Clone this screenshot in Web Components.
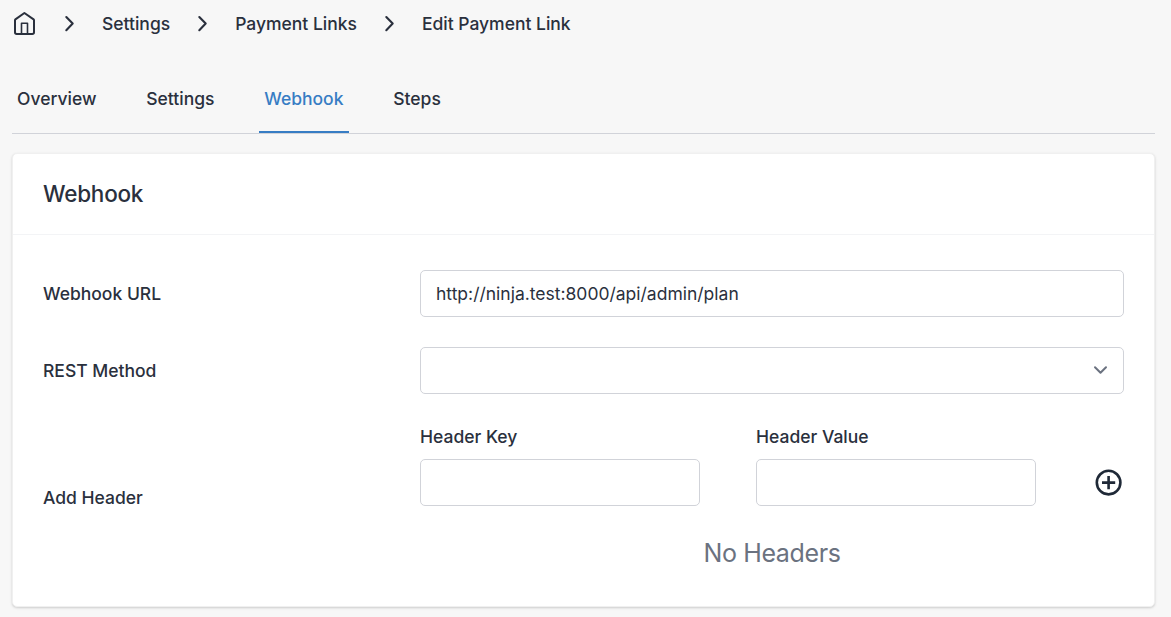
<!DOCTYPE html>
<html lang="en">
<head>
<meta charset="utf-8">
<title>Edit Payment Link</title>
<style>
html,body{height:100%}
body{margin:0;background:#f7f7f7;color:#2a303d;font:500 17.5px/25px Inter,"Liberation Sans",sans-serif;overflow:hidden}
</style>
</head>
<body>
<payment-page></payment-page>
<script>
const define = (name, html, setup) => {
  const template = document.createElement('template');
  template.innerHTML = html;
  customElements.define(name, class extends HTMLElement {
    constructor() {
      super();
      this.attachShadow({ mode: 'open' }).append(template.content.cloneNode(true));
    }
    connectedCallback() { if (setup) setup(this, this.shadowRoot); }
  });
};

define('home-icon', `<style>:host{display:block;width:25px;height:25px}svg{display:block}</style>
<svg width="25" height="25" viewBox="0 0 25 25" fill="none" stroke="currentColor" stroke-width="2" stroke-linecap="round" stroke-linejoin="round"><path d="M12.4 2 3.4 8.4Q3 8.7 3 9.2V21.3Q3 23 4.7 23H20.3Q22 23 22 21.3V9.2Q22 8.7 21.6 8.4Z"/><path stroke-width="1.6" d="M9.5 22.5V12.2H15.5V22.5"/></svg>`);

define('crumb-chevron', `<style>:host{display:block;width:25px;height:25px}svg{display:block}</style>
<svg width="25" height="25" viewBox="0 0 25 25" fill="none" stroke="currentColor" stroke-width="2.1" stroke-linecap="round" stroke-linejoin="round"><path d="m9.3 6 6.4 6.6-6.4 6.6"/></svg>`);

define('bread-crumbs', `<style>:host{display:flex;align-items:center;gap:20px;height:25px;letter-spacing:-.01px}</style><slot></slot>`);

define('tab-item', `<style>:host{display:block;box-sizing:border-box;height:47px;padding:0 5.2px 0 5px;border-bottom:2px solid transparent;white-space:nowrap}
:host([active]){color:#377dc4;border-color:#377dc4}</style><slot></slot>`);

define('tab-bar', `<style>:host{display:flex;gap:39.6px;border-bottom:1px solid #d1d3d9}</style><slot></slot>`);

define('settings-card', `<style>
:host{display:block;box-sizing:border-box;height:454px;background:#fff;border:1px solid #f0f0f0;border-radius:5px;box-shadow:0 1px 3px rgba(0,0,0,.12),0 1px 2px rgba(0,0,0,.06)}
header{box-sizing:border-box;height:81px;padding:25px 30px;border-bottom:1px solid #f3f4f6;font-size:22.5px;line-height:30px;letter-spacing:-.24px}
.body{padding:35px 30px 0}
</style><header><slot name="title"></slot></header><div class="body"><slot></slot></div>`);

define('form-row', `<style>:host{display:grid;grid-template-columns:377px minmax(0,1fr);align-items:center;margin-bottom:30px}</style>
<div><slot name="label"></slot></div><div><slot></slot></div>`);

define('text-field', `<style>:host{display:block}
.box{box-sizing:border-box;height:47px;padding:0 14.5px 0 15px;display:flex;align-items:center;justify-content:space-between;background:#fff;border:1px solid #d1d3d9;border-radius:5px;font-weight:400}
</style><div class="box"><slot></slot></div>`);

define('select-arrow', `<style>:host{display:block;width:17px;height:17px}svg{display:block}</style>
<svg width="17" height="17" viewBox="0 0 17 17" fill="none" stroke="#6b7280" stroke-width="2" stroke-linecap="round" stroke-linejoin="round"><path d="m3 5.3 5.5 5.5 5.5-5.5"/></svg>`);

define('add-button', `<style>:host{display:block;width:28px;height:28px;color:#1f2937}svg{display:block}</style>
<svg width="28" height="28" viewBox="0 0 28 28" fill="none" stroke="currentColor" stroke-width="2.6"><circle cx="13.6" cy="13.6" r="11.8"/><path d="M13.6 7v13.2M7 13.6h13.2"/></svg>`);

define('header-editor', `<style>
:host{display:block}
.fields{display:grid;grid-template-columns:280px 280px 1fr;column-gap:56px}
.caption{margin-bottom:10px}
.add{display:flex;justify-content:flex-end;align-items:flex-end;padding:0 1px 9px 0}
.empty{margin:30px 0 -1px;text-align:center;font-weight:400;font-size:25px;line-height:35px;letter-spacing:-.36px;color:#6b7280}
</style>
<div class="fields"><div><div class="caption">Header Key</div><text-field></text-field></div>
<div><div class="caption">Header Value</div><text-field></text-field></div>
<div class="add"><add-button></add-button></div></div>
<div class="empty">No Headers</div>`);

define('payment-page', `<style>
:host{display:block;padding:11px 16px 0 12px}
tab-bar{margin-top:50px}
settings-card{margin-top:19px}
</style>
<bread-crumbs><home-icon></home-icon><crumb-chevron></crumb-chevron><span>Settings</span><crumb-chevron></crumb-chevron><span>Payment Links</span><crumb-chevron></crumb-chevron><span>Edit Payment Link</span></bread-crumbs>
<tab-bar><tab-item>Overview</tab-item><tab-item>Settings</tab-item><tab-item active>Webhook</tab-item><tab-item>Steps</tab-item></tab-bar>
<settings-card><span slot="title">Webhook</span>
<form-row><span slot="label">Webhook URL</span><text-field>http://ninja.test:8000/api/admin/plan</text-field></form-row>
<form-row><span slot="label">REST Method</span><text-field><span></span><select-arrow></select-arrow></text-field></form-row>
<form-row><span slot="label">Add Header</span><header-editor></header-editor></form-row>
</settings-card>`);
</script>
</body>
</html>
